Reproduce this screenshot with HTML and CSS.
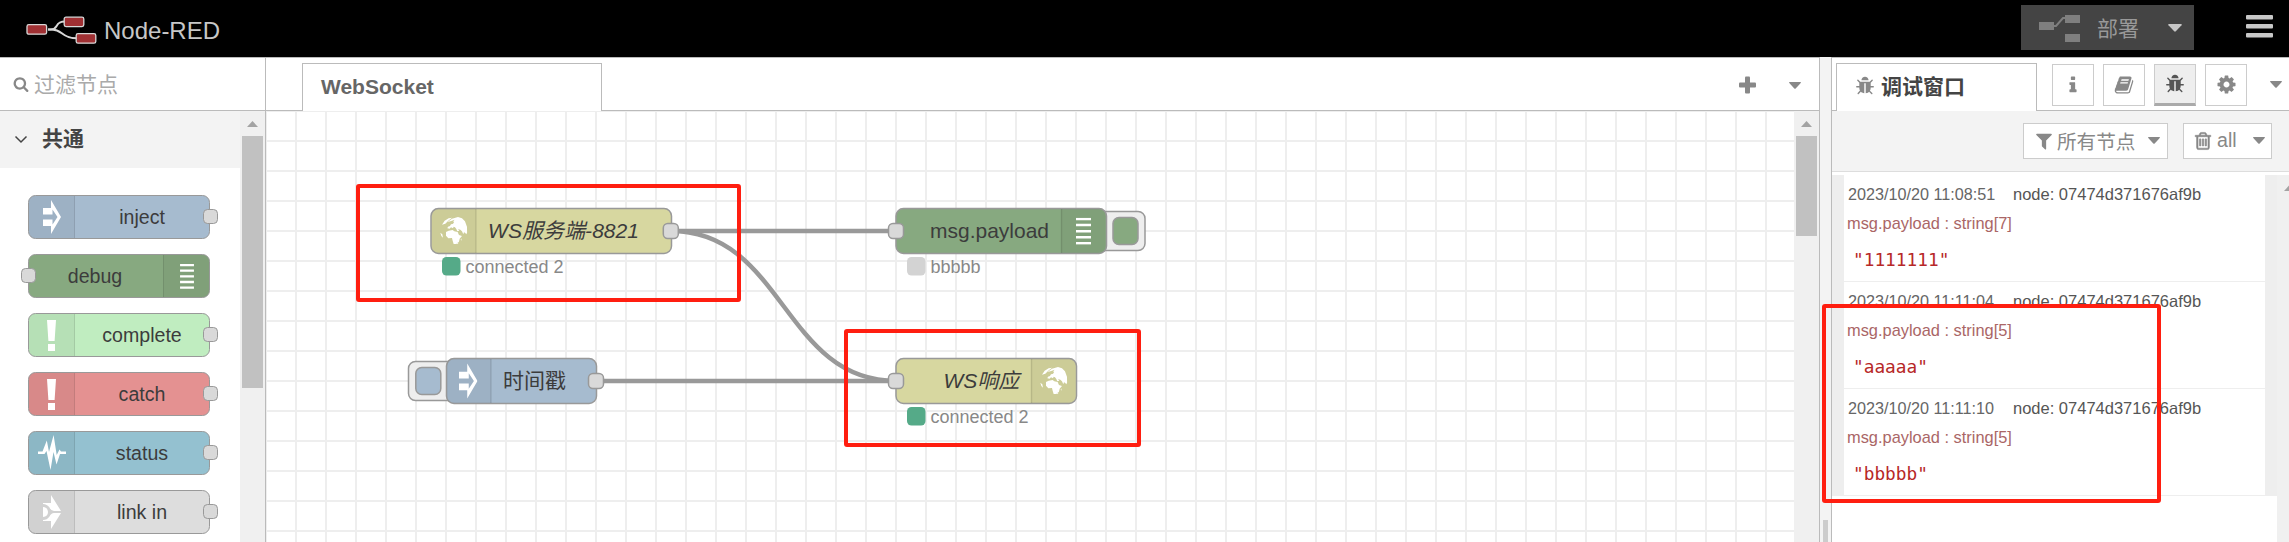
FILE: index.html
```html
<!DOCTYPE html>
<html lang="zh-CN">
<head>
<meta charset="utf-8">
<title>Node-RED</title>
<link rel="stylesheet" href="styles.css">
</head>
<body>
<svg class="defs" width="0" height="0">
  <symbol id="bug" viewBox="0 0 1792 1792"><path d="M1696 960q0 26-19 45t-45 19h-224q0 171-67 290l208 209q19 19 19 45t-19 45q-18 19-45 19t-45-19l-198-197q-5 5-15 13t-42 28.500-65 36.500-82 29-97 13v-896h-128v896q-51 0-101.500-13.500t-87-33-66-39-43.500-32.500l-15-14-183 207q-20 21-48 21-24 0-43-16-19-18-20.500-44.500t15.500-46.500l202-227q-58-114-58-274h-224q-26 0-45-19t-19-45 19-45 45-19h224v-294l-173-173q-19-19-19-45t19-45 45-19 45 19l173 173h844l173-173q19-19 45-19t45 19 19 45-19 45l-173 173v294h224q26 0 45 19t19 45zm-480-576h-640q0-133 93.500-226.500t226.500-93.500 226.500 93.500 93.500 226.500z"/></symbol>
  <symbol id="caret" viewBox="0 0 12 7"><path d="M0.600 0H11.400Q12.300 0.200 11.700 1L6.700 6.400Q6 7 5.300 6.400L0.300 1Q-0.300 0.200 0.600 0Z"/></symbol>
  <symbol id="arrow" viewBox="0 0 18 34"><path d="M0 8H8V0L18 17L8 34V26H0V20H8.600V26L14.500 17L8.600 8V14H0Z"/></symbol>
  <symbol id="inject-arrow" viewBox="0 0 18 34"><path fill-rule="evenodd" d="M8 0L18 17L8 34V26H0V19.500H9.500V24.500L14.500 17L9.500 9.500V14.500H0V8H8Z"/></symbol>
  <symbol id="bang" viewBox="0 0 9 31"><path d="M0 0H9L7.600 21H1.400ZM1 24H8V31H1Z"/></symbol>
  <symbol id="lines" viewBox="0 0 15 27"><path d="M0 0H15V2.500H0ZM0 6H15V8.500H0ZM0 12.200H15V14.700H0ZM0 18.200H15V20.700H0ZM0 24.300H15V26.800H0Z"/></symbol>
  <symbol id="globe" viewBox="0 0 82 82"><path d="M22 15L36 5L54 0L66 4L75 13L81 29L82 46L79 52L75 47L72 46L70 52L66 43L61 38L54 36L58 41L52 43L49 36L45 31L41 29L39 34L33 31L29 35L22 34L24 29L30 27L33 22L38 21L42 17L40 13L44 8L34 12Z"/><path d="M6 23L14 11L26 4L36 2L24 12L16 20Z"/><path d="M18 45L26 41L38 39L43 43L53 45L57 54L66 57L59 65L57 74L48 81L41 81L38 71L36 63L25 64L18 56Z"/><path d="M1 47L7 52L9 62L4 57ZM62 68L65 64L64 71ZM47 80L56 77L52 82Z"/></symbol>
</svg>

<header class="header">
  <svg class="logo" width="72" height="30" viewBox="0 0 72 30">
    <g fill="none" stroke="#d8d8d8" stroke-width="2"><path d="M22 15.500H25C33 15.500 28 7.500 39 7.500"/><path d="M22 15.500H26C37 15.500 35 24.300 51 24.300"/></g>
    <g fill="#a03033" stroke="#d8d8d8" stroke-width="1.300"><rect x="1" y="10.600" width="19.600" height="9.600" rx="1.800"/><rect x="38.200" y="3.200" width="19.600" height="9.400" rx="1.800"/><rect x="50.200" y="19.600" width="19.600" height="9.600" rx="1.800"/></g>
  </svg>
  <span class="brand">Node-RED</span>
  <div class="deploy">
    <svg class="deploy-icon" width="42" height="28" viewBox="0 0 42 28" fill="#7f7f7f"><path d="M0 8H15V16H0ZM26 1H41V9H26ZM26 20H41V28H26Z"/><path d="M14 12H17L24 4H27" fill="none" stroke="#7f7f7f" stroke-width="2"/></svg>
    <span>部署</span>
    <svg class="deploy-caret" width="14" height="8"><use href="#caret"/></svg>
  </div>
  <svg class="menu" width="27" height="23" fill="#c7c7c7"><rect width="27" height="4.500" rx="1"/><rect y="9" width="27" height="4.500" rx="1"/><rect y="18" width="27" height="4.500" rx="1"/></svg>
</header>

<main class="main">
  <aside class="palette">
    <div class="search">
      <svg width="16" height="16" viewBox="0 0 1792 1792" fill="#888"><path d="M1216 832q0-185-131.500-316.500t-316.500-131.500-316.500 131.500-131.500 316.500 131.500 316.500 316.500 131.500 316.500-131.500 131.500-316.500zm512 832q0 52-38 90t-90 38q-54 0-90-38l-343-342q-179 124-399 124-143 0-273.500-55.500t-225-150-150-225-55.500-273.500 55.500-273.500 150-225 225-150 273.500-55.500 273.500 55.500 225 150 150 225 55.500 273.500q0 220-124 399l343 343q37 37 37 90z"/></svg>
      <span>过滤节点</span>
    </div>
    <div class="palette-body">
      <div class="palette-list">
        <div class="category"><svg width="14" height="9" fill="none" stroke="#444" stroke-width="1.500"><path d="M1.500 1.500L7 7L12.500 1.500"/></svg><b>共通</b></div>
        <div class="nodes">
          <div class="pnode inject"><i><svg width="18" height="34"><use href="#inject-arrow"/></svg></i><span>inject</span><em></em></div>
          <div class="pnode debug"><span>debug</span><i><svg width="14" height="25"><use href="#lines"/></svg></i><em></em></div>
          <div class="pnode complete"><i><svg width="9" height="31"><use href="#bang"/></svg></i><span>complete</span><em></em></div>
          <div class="pnode catch"><i><svg width="9" height="31"><use href="#bang"/></svg></i><span>catch</span><em></em></div>
          <div class="pnode status"><i><svg width="28" height="36" viewBox="0 0 28 36"><path d="M0 16.500H4.500L8.800 5.500L11 17L15.600 0L18.700 20L21.500 14.500L23 16.500H28V19H22L18.500 29.500L15.500 17L12.500 35L8.500 16L6.500 19H0Z"/></svg></i><span>status</span><em></em></div>
          <div class="pnode link"><i><svg width="18" height="34" viewBox="0 0 18 34"><path d="M8 0L18 16H11Q8 16 6.500 12.500Q4 9 0 9V8H8ZM8 34L18 18H11Q8 18 6.500 21.500Q4 25 0 25V26H8ZM0 12Q5 12.500 5 17Q5 21.500 0 22Z"/></svg></i><span>link in</span><em></em></div>
        </div>
      </div>
      <div class="scrollbar"><svg width="11" height="6" fill="#a3a3a3"><path d="M0 6L5.500 0L11 6Z"/></svg><div class="thumb tall"></div></div>
    </div>
  </aside>

  <section class="workspace">
    <div class="tabs">
      <div class="tab">WebSocket</div>
      <svg class="plus" width="18" height="18" fill="#888"><rect y="6.500" width="17" height="5" rx="1"/><rect x="6" y="0.500" width="5" height="17" rx="1"/></svg>
      <svg class="tabs-caret" width="12" height="7"><use href="#caret"/></svg>
    </div>
    <div class="canvas-row">
      <svg class="canvas" width="1528" height="431" viewBox="266 111 1528 431">
        <defs><pattern id="grid" x="265" y="110" width="30" height="30" patternUnits="userSpaceOnUse"><path d="M0 0H30V2H2V30H0Z" fill="#eee"/></pattern></defs>
        <rect x="266" y="111" width="1528" height="431" fill="url(#grid)"/>
        <g class="wires"><path d="M671 231H896"/><path d="M671 231C783.500 231 783.500 381 896 381"/><path d="M597 381H896"/></g>

        <g class="node">
          <rect class="box ws" x="431" y="208.500" width="240.500" height="45" rx="7.500"/>
          <path class="shade" d="M439 209H476V253H439Q432 253 432 246V216Q432 209 439 209Z"/><path class="divider" d="M476 209V253"/>
          <use class="glyph" href="#globe" x="440" y="217" width="27.300" height="27.300"/>
          <text class="label italic" x="488" y="238" textLength="151" lengthAdjust="spacingAndGlyphs">WS服务端-8821</text>
          <rect class="port" x="663.300" y="223.500" width="15" height="15" rx="4.500"/>
          <rect x="442" y="257" width="18.500" height="18.500" rx="4.500" fill="#5a8"/><text class="state" x="465.500" y="273">connected 2</text>
        </g>

        <g class="node">
          <rect class="button" x="408.500" y="361.500" width="48" height="39" rx="7"/><rect class="box ts" x="415.800" y="367.500" width="25" height="27" rx="6"/>
          <rect class="box ts" x="446.500" y="358.500" width="150" height="45" rx="7.500"/>
          <path class="shade" d="M454 359H491V403H454Q447 403 447 396V366Q447 359 454 359Z"/><path class="divider" d="M491 359V403"/>
          <use class="glyph" href="#inject-arrow" x="459" y="362.500" width="18.500" height="37"/>
          <text class="label" x="503" y="388">时间戳</text>
          <rect class="port" x="588.500" y="373.500" width="15" height="15" rx="4.500"/>
        </g>

        <g class="node">
          <rect class="button" x="1096" y="211.500" width="49" height="39" rx="7"/><rect class="box dbg" x="1113" y="217.500" width="25" height="27" rx="6"/>
          <rect class="box dbg" x="896" y="208.500" width="210.500" height="45" rx="7.500"/>
          <path class="shade" d="M1061 209H1098Q1105.500 209 1105.500 216V246Q1105.500 253 1098 253H1061Z"/><path class="divider" d="M1061.500 209V253"/>
          <use class="glyph" href="#lines" x="1076" y="217.800" width="15" height="27"/>
          <text class="label" x="930" y="238" textLength="119" lengthAdjust="spacingAndGlyphs">msg.payload</text>
          <rect class="port" x="888.500" y="223.500" width="15" height="15" rx="4.500"/>
          <rect x="907" y="257" width="18.500" height="18.500" rx="4.500" fill="#d3d3d3"/><text class="state" x="930.500" y="273">bbbbb</text>
        </g>

        <g class="node">
          <rect class="box ws" x="896" y="358.500" width="180.500" height="45" rx="7.500"/>
          <path class="shade" d="M1031 359H1068Q1075.500 359 1075.500 366V396Q1075.500 403 1068 403H1031Z"/><path class="divider" d="M1031.500 359V403"/>
          <use class="glyph" href="#globe" x="1040" y="367" width="27.300" height="27.300"/>
          <text class="label italic" x="943.500" y="388">WS响应</text>
          <rect class="port" x="888.500" y="373.500" width="15" height="15" rx="4.500"/>
          <rect x="907" y="407" width="18.500" height="18.500" rx="4.500" fill="#5a8"/><text class="state" x="930.500" y="423">connected 2</text>
        </g>
      </svg>
      <div class="scrollbar"><svg width="11" height="6" fill="#a3a3a3"><path d="M0 6L5.500 0L11 6Z"/></svg><div class="thumb short"></div></div>
    </div>
  </section>

  <div class="separator"><div class="grip"></div></div>

  <aside class="sidebar">
    <div class="side-tabs">
      <div class="side-tab"><svg width="20" height="20"><use href="#bug"/></svg><b>调试窗口</b></div>
      <div class="side-buttons">
        <div><svg width="20" height="20" viewBox="0 0 1792 1792"><path d="M1216 1344v128q0 26-19 45t-45 19h-512q-26 0-45-19t-19-45v-128q0-26 19-45t45-19h64v-384h-64q-26 0-45-19t-19-45v-128q0-26 19-45t45-19h384q26 0 45 19t19 45v576h64q26 0 45 19t19 45zm-128-1152v192q0 26-19 45t-45 19h-256q-26 0-45-19t-19-45v-192q0-26 19-45t45-19h256q26 0 45 19t19 45z"/></svg></div>
        <div><svg width="20" height="20" viewBox="0 0 1792 1792"><path d="M1703 478q40 57 18 129l-275 906q-19 64-76.500 107.500t-122.500 43.500h-923q-77 0-148.500-53.500t-99.500-131.500q-24-67-2-127 0-4 3-27t4-37q1-8-3-21.500t-3-19.500q2-11 8-21t16.500-23.500 16.500-23.500q23-38 45-91.500t30-91.500q3-10 .5-30t-.5-28q3-11 17-28t17-23q21-36 42-92t25-90q1-9-2.500-32t.5-28q4-13 22-30.500t22-22.500q19-26 42.500-84.500t27.500-96.500q1-8-3-25.500t-2-26.500q2-8 9-18t18-23 17-21q8-12 16.500-30.500t15-35 16-36 19.500-32 26.500-23.500 36-11.500 47.500 5.500l-1 3q38-9 51-9h761q74 0 114 56t18 130l-274 906q-36 119-71.500 153.500t-128.500 34.500h-869q-27 0-38 15-11 16-1 43 24 70 144 70h923q29 0 56-15.500t35-41.500l300-987q7-22 5-57 38 15 59 43zm-1064 2q-4 13 2 22.500t20 9.500h608q13 0 25.500-9.500t16.500-22.500l21-64q4-13-2-22.500t-20-9.500h-608q-13 0-25.500 9.500t-16.500 22.500zm-83 256q-4 13 2 22.500t20 9.500h608q13 0 25.500-9.500t16.500-22.500l21-64q4-13-2-22.500t-20-9.500h-608q-13 0-25.500 9.500t-16.500 22.500z"/></svg></div>
        <div class="active"><svg width="20" height="20"><use href="#bug"/></svg></div>
        <div><svg width="21" height="21" viewBox="0 0 1792 1792"><path d="M1152 896q0-106-75-181t-181-75-181 75-75 181 75 181 181 75 181-75 75-181zm512-109v222q0 12-8 23t-20 13l-185 28q-19 54-39 91 35 50 107 138 10 12 10 25t-9 23q-27 37-99 108t-94 71q-12 0-26-9l-138-108q-44 23-91 38-16 136-29 186-7 28-36 28h-222q-14 0-24.500-8.500t-11.500-21.500l-28-184q-49-16-90-37l-141 107q-10 9-25 9-14 0-25-11-126-114-165-168-7-10-7-23 0-12 8-23 15-21 51-66.500t54-70.500q-27-50-41-99l-183-27q-13-2-21-12.500t-8-23.500v-222q0-12 8-23t19-13l186-28q14-46 39-92-40-57-107-138-10-12-10-24 0-10 9-23 26-36 98.500-107.500t94.500-71.500q13 0 26 10l138 107q44-23 91-38 16-136 29-186 7-28 36-28h222q14 0 24.500 8.500t11.500 21.500l28 184q49 16 90 37l142-107q9-9 24-9 13 0 25 10 129 119 165 170 7 8 7 22 0 12-8 23-15 21-51 66.500t-54 70.500q26 50 41 98l183 28q13 2 21 12.500t8 23.500z"/></svg></div>
        <svg class="side-caret" width="12" height="7"><use href="#caret"/></svg>
      </div>
    </div>
    <div class="toolbar">
      <div class="tool filter"><svg width="20" height="20" viewBox="0 0 1792 1792"><path d="M1595 295q17 41-14 70l-493 493v742q0 42-39 59-13 5-25 5-27 0-45-19l-256-256q-19-19-19-45v-486l-493-493q-31-29-14-70 17-39 59-39h1280q42 0 59 39z"/></svg><span>所有节点</span><svg width="12" height="7"><use href="#caret"/></svg></div>
      <div class="tool clear"><svg width="20" height="20" viewBox="0 0 1792 1792"><path d="M704 736v576q0 14-9 23t-23 9h-64q-14 0-23-9t-9-23v-576q0-14 9-23t23-9h64q14 0 23 9t9 23zm256 0v576q0 14-9 23t-23 9h-64q-14 0-23-9t-9-23v-576q0-14 9-23t23-9h64q14 0 23 9t9 23zm256 0v576q0 14-9 23t-23 9h-64q-14 0-23-9t-9-23v-576q0-14 9-23t23-9h64q14 0 23 9t9 23zm128 724v-948h-896v948q0 22 7 40.500t14.500 27 10.500 8.500h832q3 0 10.500-8.500t14.500-27 7-40.500zm-672-1076h448l-48-117q-7-9-17-11h-317q-10 2-17 11zm928 32v64q0 14-9 23t-23 9h-96v948q0 83-47 143.500t-113 60.500h-832q-66 0-113-58.500t-47-141.500v-952h-96q-14 0-23-9t-9-23v-64q0-14 9-23t23-9h309l70-167q15-37 54-63t79-26h320q40 0 79 26t54 63l70 167h309q14 0 23 9t9 23z" stroke="#888" stroke-width="50"/></svg><span>all</span><svg width="12" height="7"><use href="#caret"/></svg></div>
    </div>
    <div class="messages">
      <div class="message-list">
        <article class="message"><div class="meta"><span>2023/10/20 11:08:51</span><span class="from">node: 07474d371676af9b</span></div><div class="topic">msg.payload : string[7]</div><div class="value">"1111111"</div></article>
        <article class="message"><div class="meta"><span>2023/10/20 11:11:04</span><span class="from">node: 07474d371676af9b</span></div><div class="topic">msg.payload : string[5]</div><div class="value">"aaaaa"</div></article>
        <article class="message"><div class="meta"><span>2023/10/20 11:11:10</span><span class="from">node: 07474d371676af9b</span></div><div class="topic">msg.payload : string[5]</div><div class="value">"bbbbb"</div></article>
      </div>
      <div class="message-scroll"><svg width="11" height="6" fill="#a3a3a3"><path d="M0 6L5.500 0L11 6Z"/></svg></div>
    </div>
  </aside>
</main>

<div class="mark mark-server"></div>
<div class="mark mark-response"></div>
<div class="mark mark-messages"></div>
</body>
</html>
```

FILE: styles.css
```css
* { box-sizing: border-box; }
body { margin: 0; width: 2289px; height: 542px; overflow: hidden; position: relative; display: flex; flex-direction: column; background: #fff; font: 21px "Liberation Sans", "Noto Sans CJK SC", sans-serif; color: #444; }
svg { display: block; flex: none; }
.defs { position: absolute; }
span, b { white-space: nowrap; }

.header { height: 57px; flex: none; background: #000; display: flex; align-items: flex-start; padding-left: 26px; color: #c7c7c7; }
.logo { margin-top: 14px; }
.brand { font-size: 24px; line-height: 28px; margin: 17px 0 0 6px; }
.deploy { margin: 5px 0 0 auto; width: 173px; height: 45px; background: #444; display: flex; align-items: center; color: #999; }
.deploy span { margin-left: 16px; width: 42px; padding-bottom: 2px; }
.deploy-icon { margin: 0 0 0 18px; }
.deploy-caret { margin-left: 29px; fill: #c7c7c7; }
.menu { margin: 15px 16px 0 52px; }

.main { flex: 1; min-height: 0; display: grid; grid-template-columns: 266px 1554px 11px 458px; }
.palette, .workspace, .sidebar { border-top: 1px solid #bbb; display: flex; flex-direction: column; min-width: 0; min-height: 0; overflow: hidden; }
.palette { border-right: 1px solid #bbb; }
.search { height: 53px; flex: none; border-bottom: 1px solid #bbb; display: flex; align-items: center; padding-left: 13px; gap: 5px; color: #aaa; }
.search span { padding-bottom: 2px; }
.palette-body { flex: 1; display: flex; min-height: 0; }
.palette-list { width: 240px; }
.category { height: 57px; background: #f3f3f3; display: flex; align-items: center; padding-left: 14px; gap: 14px; }
.category b { padding-bottom: 5px; }
.nodes { padding: 27px 0 0 28px; display: flex; flex-direction: column; gap: 15px; }
.pnode { position: relative; width: 182px; height: 44px; border: 1.500px solid #999; border-radius: 7.500px; display: flex; font-size: 19.600px; flex: none; color: #3c3c3c; }
.pnode i { width: 46px; background: rgba(0,0,0,.05); border-right: 1px solid rgba(0,0,0,.1); border-radius: 6px 0 0 6px; display: flex; align-items: center; justify-content: center; fill: #fff; }
.pnode span { flex: 1; text-align: center; line-height: 43px; }
.pnode em { position: absolute; right: -9px; top: 13px; width: 15px; height: 15px; border: 1px solid #999; border-radius: 4.500px; background: #d9d9d9; }
.pnode.debug em { right: auto; left: -8px; }
.pnode.debug i { border: 0; border-left: 1px solid rgba(0,0,0,.1); border-radius: 0 6px 6px 0; }
.pnode.debug span { padding-right: 2px; }
.inject { background: #a6bbcf; }
.debug { background: #87a980; }
.complete { background: #c0edc0; }
.catch { background: #e49191; }
.status { background: #94c1d0; }
.link { background: #ddd; }

.scrollbar { width: 25px; flex: none; background: #f0f0f0; display: flex; flex-direction: column; padding: 10px 0 0 2px; }
.scrollbar svg { margin-left: 5px; }
.thumb { width: 21px; background: #c1c1c1; margin-top: 9px; }
.tall { height: 252px; }
.short { height: 100px; }

.workspace { border-right: 1px solid #bbb; }
.tabs { height: 53px; flex: none; border-bottom: 1px solid #bbb; display: flex; padding: 5px 0 0 36px; }
.tab { width: 300px; height: 48px; border: 1px solid #bbb; border-bottom: 0; background: #fff; padding-left: 18px; font-weight: bold; font-size: 21px; line-height: 45px; color: #666; }
.plus { margin: 13px 0 0 1137px; }
.tabs-caret { margin: 19px 0 0 32px; fill: #888; }
.canvas-row { flex: 1; display: flex; }
.wires { fill: none; stroke: #999; stroke-width: 4.500px; }
.box { stroke: #999; stroke-width: 1.500px; }
.ws { fill: #d7d7a0; }
.ts { fill: #a6bbcf; }
.dbg { fill: #87a980; }
.shade { fill: rgba(0,0,0,.05); }
.divider { stroke: rgba(0,0,0,.1); stroke-width: 1.500px; }
.glyph { fill: #fff; }
.port { fill: #d9d9d9; stroke: #999; stroke-width: 1.500px; }
.button { fill: #eee; stroke: #999; stroke-width: 1.500px; }
.label { font-size: 21px; fill: #3c3c3c; }
.italic { font-style: italic; }
.state { font-size: 18px; fill: #888; }

.separator { background: #f3f3f3; padding: 463px 0 0 3px; overflow: hidden; }
.grip { width: 5px; height: 22px; background: #ccc; }

.sidebar { border-left: 1px solid #bbb; }
.side-tabs { height: 53px; flex: none; border-bottom: 1px solid #bbb; display: flex; padding: 5px 0 0 4px; fill: #888; }
.side-tab { width: 201px; height: 48px; flex: none; border: 1px solid #bbb; border-bottom: 0; background: #fff; display: flex; align-items: center; padding: 0 0 4px 18px; gap: 6px; }
.side-tab b { padding-bottom: 2px; }
.side-buttons { display: flex; gap: 9px; margin: 1px 0 0 15px; }
.side-buttons div { width: 42px; height: 42px; border: 1px solid #ccc; display: flex; align-items: center; justify-content: center; padding-bottom: 1px; }
.side-buttons .active { background: #eee; border-bottom: 3px solid #aaa; fill: #555; padding: 0; }
.side-caret { margin: 17px 0 0 14px; }
.toolbar { height: 61px; flex: none; background: #f3f3f3; border-bottom: 1px solid #ddd; display: flex; padding: 12px 0 0 191px; gap: 15px; color: #888; fill: #888; }
.tool { height: 36px; border: 1px solid #ccc; background: #fff; display: flex; align-items: center; font-size: 19.600px; padding-bottom: 1px; }
.tool span { padding-bottom: 1px; }
.filter { width: 145px; padding-left: 10px; gap: 3px; }
.filter span { width: 80px; }
.filter svg:last-child { margin-left: 8px; }
.clear { width: 89px; padding-left: 9px; gap: 4px; }
.clear svg:last-child { margin-left: 12px; }
.messages { padding-top: 3px; flex: 1; display: flex; }
.message-list { width: 445px; flex: none; }
.message { height: 107px; border: 0 solid #eee; border-width: 0 12px 1px; padding: 5px 0 0 4px; background: #fff; }
.meta { display: flex; line-height: 29px; font-size: 16.200px; color: #666; }
.meta span:first-child { width: 150px; }
.from { margin-left: 15px; font-size: 16.500px; color: #555; }
.topic { line-height: 29px; font-size: 16.400px; color: #a66; margin-left: -1px; }
.value { line-height: 43px; font-family: "DejaVu Sans Mono", monospace; font-size: 17.800px; color: #b72828; margin-left: 5px; }
.message-scroll { width: 12px; background: #f0f0f0; padding: 10px 0 0 7px; overflow: hidden; }

.mark { position: absolute; border: 4px solid #ff1e10; border-radius: 3px; }
.mark-server { left: 356px; top: 184px; width: 385px; height: 118px; }
.mark-response { left: 844px; top: 329px; width: 297px; height: 118px; }
.mark-messages { left: 1822px; top: 304px; width: 339px; height: 199px; }
```
